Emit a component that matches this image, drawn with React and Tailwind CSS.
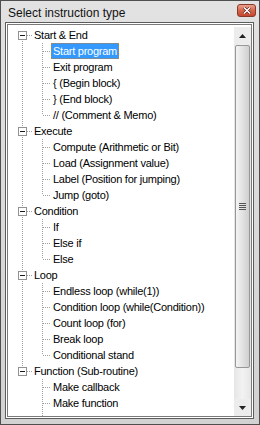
const tree = [
  {
    label: 'Start & End',
    children: ['Start program', 'Exit program', '{ (Begin block)', '} (End block)', '// (Comment & Memo)'],
  },
  {
    label: 'Execute',
    children: ['Compute (Arithmetic or Bit)', 'Load (Assignment value)', 'Label (Position for jumping)', 'Jump (goto)'],
  },
  { label: 'Condition', children: ['If', 'Else if', 'Else'] },
  {
    label: 'Loop',
    children: ['Endless loop (while(1))', 'Condition loop (while(Condition))', 'Count loop (for)', 'Break loop', 'Conditional stand'],
  },
  { label: 'Function (Sub-routine)', children: ['Make callback', 'Make function'], more: true },
];

const DOT = '#a0a0a0';

// one column of tree lines, drawn pixel by pixel
function LineCell({ width = 20, top = false, bottom = false, horiz = false, box = false }) {
  const dots = [];
  const cx = 10;
  const y0 = top ? 0 : 8;
  const y1 = bottom ? 16 : 8;
  if (top || bottom) {
    for (let y = y0; y < y1; y += 2) {
      if (box && y >= 4 && y <= 12) continue;
      dots.push(<rect key={'v' + y} x={cx} y={y} width="1" height="1" fill={DOT} />);
    }
  }
  if (horiz) {
    for (let x = box ? 15 : cx + 1; x < width; x += 2) {
      dots.push(<rect key={'h' + x} x={x} y={8} width="1" height="1" fill={DOT} />);
    }
  }
  return (
    <svg width={width} height="16" className="shrink-0" shapeRendering="crispEdges">
      {dots}
      {box && (
        <g>
          <rect x="6.5" y="4.5" width="8" height="8" fill="#fff" stroke="#919191" />
          <rect x="8" y="8" width="5" height="1" fill="#1a1a1a" />
        </g>
      )}
    </svg>
  );
}

function Row({ children }) {
  return <div className="flex h-4 items-center pl-1">{children}</div>;
}

function Label({ text, selected }) {
  return (
    <span
      className={
        'h-4 px-[2px] leading-[16px] whitespace-nowrap tracking-[-0.25px] ' +
        (selected ? 'bg-[#3399ff] text-white outline-1 outline-dotted outline-[#c08040] -outline-offset-1' : 'text-black')
      }
    >
      {text}
    </span>
  );
}

function ScrollArrow({ up }) {
  return (
    <div className="h-[17px] flex items-center justify-center bg-[#ececec]">
      <svg width="7" height="4" viewBox="0 0 7 4">
        {up ? <path d="M3.5 0 L7 4 L0 4 Z" fill="#222" /> : <path d="M0 0 L7 0 L3.5 4 Z" fill="#222" />}
      </svg>
    </div>
  );
}

export default function App() {
  return (
    <div
      className="w-[260px] h-[425px] border border-[#4e4e4e] bg-gradient-to-b from-[#e2e2e2] to-[#d2d2d2] flex flex-col overflow-hidden"
      style={{ fontFamily: '"Liberation Sans", Arial, sans-serif' }}
    >
      {/* title bar */}
      <div className="h-[21px] shrink-0 flex items-start justify-between pl-[7px] pr-[3px]">
        <span className="text-[12px] leading-[15px] mt-[5px] text-[#111]">Select instruction type</span>
        <div className="mt-[3px] w-[19px] h-[13px] rounded-[3px] border border-[#8a3a2a] bg-gradient-to-b from-[#eaa08c] via-[#d5664c] to-[#c4472e] flex items-center justify-center">
          <svg width="8" height="7" viewBox="0 0 8 7">
            <path d="M1 0.5 L7 6.5 M7 0.5 L1 6.5" stroke="#4a1a10" strokeWidth="2.6" />
            <path d="M1 0.5 L7 6.5 M7 0.5 L1 6.5" stroke="#fff" strokeWidth="1.5" />
          </svg>
        </div>
      </div>

      {/* tree view frame */}
      <div className="flex-1 min-h-0 pl-1 pr-[5px] pb-[5px]">
        <div className="h-full border border-[#5c5c5c] bg-white p-px">
          <div className="h-full border border-[#7a7a7a] bg-white flex">
            <div className="flex-1 pt-[2px] text-[11px] overflow-hidden">
              {tree.map((node, i) => {
                const lastRoot = i === tree.length - 1;
                return (
                  <div key={node.label}>
                    <Row>
                      <LineCell top={i > 0} bottom={!lastRoot} horiz box />
                      <Label text={node.label} />
                    </Row>
                    {node.children.map((c, j) => {
                      const lastChild = j === node.children.length - 1 && !node.more;
                      return (
                        <Row key={c}>
                          <LineCell top={!lastRoot} bottom={!lastRoot} />
                          <LineCell width={19} top bottom={!lastChild} horiz />
                          <Label text={c} selected={c === 'Start program'} />
                        </Row>
                      );
                    })}
                    {node.more && (
                      <Row>
                        <LineCell />
                        <LineCell width={19} top bottom />
                      </Row>
                    )}
                  </div>
                );
              })}
            </div>

            {/* vertical scrollbar */}
            <div className="w-[17px] mt-[2px] bg-gradient-to-r from-[#e6e6e6] via-[#f2f2f2] to-[#e6e6e6] flex flex-col">
              <ScrollArrow up />
              <div className="flex-1 p-px flex flex-col">
                <div className="h-[323px] rounded-[2px] border border-[#979797] bg-gradient-to-r from-[#f4f4f4] via-[#e2e2e2] to-[#cfcfcf] flex items-center justify-center">
                  <div className="flex flex-col gap-px">
                    <div className="w-[7px] h-px bg-[#555]" />
                    <div className="w-[7px] h-px bg-[#555]" />
                    <div className="w-[7px] h-px bg-[#555]" />
                    <div className="w-[7px] h-px bg-[#555]" />
                  </div>
                </div>
              </div>
              <ScrollArrow />
            </div>
          </div>
        </div>
      </div>
    </div>
  );
}
